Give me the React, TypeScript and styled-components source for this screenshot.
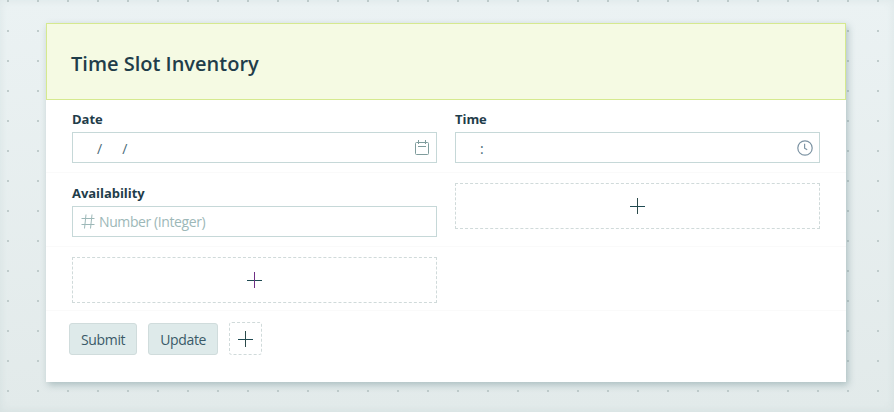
import styled, { createGlobalStyle } from 'styled-components'

const GlobalStyle = createGlobalStyle`
  html, body {
    margin: 0;
    padding: 0;
    height: 100%;
  }
  body {
    font-family: "Open Sans", "Noto Sans", sans-serif;
    color: #1f3d4a;
  }
`

const Page = styled.div`
  box-sizing: border-box;
  height: 412px;
  padding: 23px 48px 0 46px;
  overflow: hidden;
  background-color: #e8eff0;
  background-image:
    radial-gradient(circle, #c0cccc 1.5px, transparent 1.5px),
    linear-gradient(180deg, #ebf2f3 0%, #e2eaea 100%);
  background-size: 30px 30px, 100% 100%;
  background-position: -7px -14px, 0 0;
  box-shadow: inset 0 0 8px rgba(150, 175, 175, 0.18);
`

const Card = styled.div`
  box-sizing: border-box;
  height: 359px;
  background: #fff;
  box-shadow: 2px 3px 7px rgba(90, 125, 130, 0.4);
`

const Header = styled.header`
  box-sizing: border-box;
  height: 77px;
  padding: 3px 24px 0;
  display: flex;
  align-items: center;
  background: #f5fae3;
  border: 1px solid #d5e98f;
`

const Title = styled.h1`
  margin: 0;
  font-size: 20px;
  font-weight: 600;
  color: #1f3d4a;
`

const Row = styled.div<{ $height: number }>`
  box-sizing: border-box;
  height: ${props => props.$height}px;
  padding: 10px 26px 0;
  display: grid;
  grid-template-columns: 365px 365px;
  column-gap: 18px;
  border-bottom: 1px solid #fafafa;
`

const Field = styled.div<{ $drop?: number }>`
  display: flex;
  flex-direction: column;
  margin-top: ${props => props.$drop ?? 0}px;
`

const Label = styled.label`
  height: 22px;
  font-size: 13px;
  font-weight: 700;
  line-height: 18px;
  letter-spacing: -0.05px;
  color: #1f3d4a;
`

const InputBox = styled.div`
  box-sizing: border-box;
  height: 31px;
  padding: 0 6px 0 8px;
  display: flex;
  align-items: center;
  border: 1px solid #c6d8d8;
  font-size: 14px;
  color: #4a6a78;
`

const Mask = styled.div`
  flex: 1;
  display: flex;
  padding-top: 1px;
`

const MaskMark = styled.span<{ $gap: number }>`
  margin-left: ${props => props.$gap}px;
`

const Placeholder = styled.span`
  margin-left: 4px;
  font-size: 14px;
  letter-spacing: -0.4px;
  color: #9db8b8;
`

const DropZone = styled.div`
  box-sizing: border-box;
  height: 46px;
  display: flex;
  align-items: center;
  justify-content: center;
  border: 1px dashed #d0dada;
`

const Actions = styled.div`
  padding: 11px 23px 0;
  display: flex;
  align-items: flex-start;
  gap: 11px;
`

const ActionButton = styled.button`
  box-sizing: border-box;
  height: 32px;
  margin-top: 1px;
  padding: 0 11px;
  background: #deeaea;
  border: 1px solid #d0dcdc;
  border-radius: 3px;
  font-family: inherit;
  font-size: 14px;
  letter-spacing: -0.35px;
  color: #3a5a68;
`

const AddButton = styled.button`
  box-sizing: border-box;
  width: 33px;
  height: 33px;
  padding: 1px 0 0;
  display: flex;
  align-items: center;
  justify-content: center;
  background: #fff;
  border: 1px dashed #d0dada;
  border-radius: 3px;
`

const Plus = ({ color = '#2b4a4a' }: { color?: string }) => (
  <svg width="15" height="16" viewBox="0 0 15 16" fill="none">
    <path d="M0 8.5h15" stroke="#1f4a52" strokeWidth="1" />
    <path d="M7.5 0v16" stroke={color} strokeWidth="1" />
  </svg>
)

const CalendarIcon = () => (
  <svg width="14" height="15" viewBox="0 0 14 15" fill="none" stroke="#7f9c9c" strokeWidth="1">
    <rect x="0.5" y="2.5" width="13" height="12" rx="1" />
    <path d="M3.5 0v4M10.5 0v4M3 6.5h8" />
  </svg>
)

const ClockIcon = () => (
  <svg width="16" height="16" viewBox="0 0 16 16" fill="none" stroke="#7c93a3" strokeWidth="1.2">
    <circle cx="8" cy="8" r="7.2" />
    <path d="M7.6 3.8v4.4l2.6 1.6" />
  </svg>
)

const HashIcon = () => (
  <svg width="14" height="15" viewBox="0 0 14 15" fill="none" stroke="#9db8b8" strokeWidth="1">
    <path d="M5 0.5L3.5 14.5M11 0.5L9.5 14.5M0.5 4.5h13M0.5 10.5h13" />
  </svg>
)

const CalendarSlot = styled.span`
  display: flex;
  margin-right: 1px;
`

export default function App() {
  return (
    <>
      <GlobalStyle />
      <Page>
        <Card>
          <Header>
            <Title>Time Slot Inventory</Title>
          </Header>
          <Row $height={73}>
            <Field>
              <Label>Date</Label>
              <InputBox>
                <Mask>
                  <MaskMark $gap={16}>/</MaskMark>
                  <MaskMark $gap={20}>/</MaskMark>
                </Mask>
                <CalendarSlot>
                  <CalendarIcon />
                </CalendarSlot>
              </InputBox>
            </Field>
            <Field>
              <Label>Time</Label>
              <InputBox>
                <Mask>
                  <MaskMark $gap={16}>:</MaskMark>
                </Mask>
                <ClockIcon />
              </InputBox>
            </Field>
          </Row>
          <Row $height={74}>
            <Field $drop={1}>
              <Label>Availability</Label>
              <InputBox>
                <HashIcon />
                <Placeholder>Number (Integer)</Placeholder>
              </InputBox>
            </Field>
            <DropZone>
              <Plus />
            </DropZone>
          </Row>
          <Row $height={64}>
            <DropZone>
              <Plus color="#6f2f85" />
            </DropZone>
          </Row>
          <Actions>
            <ActionButton>Submit</ActionButton>
            <ActionButton>Update</ActionButton>
            <AddButton>
              <Plus />
            </AddButton>
          </Actions>
        </Card>
      </Page>
    </>
  )
}
